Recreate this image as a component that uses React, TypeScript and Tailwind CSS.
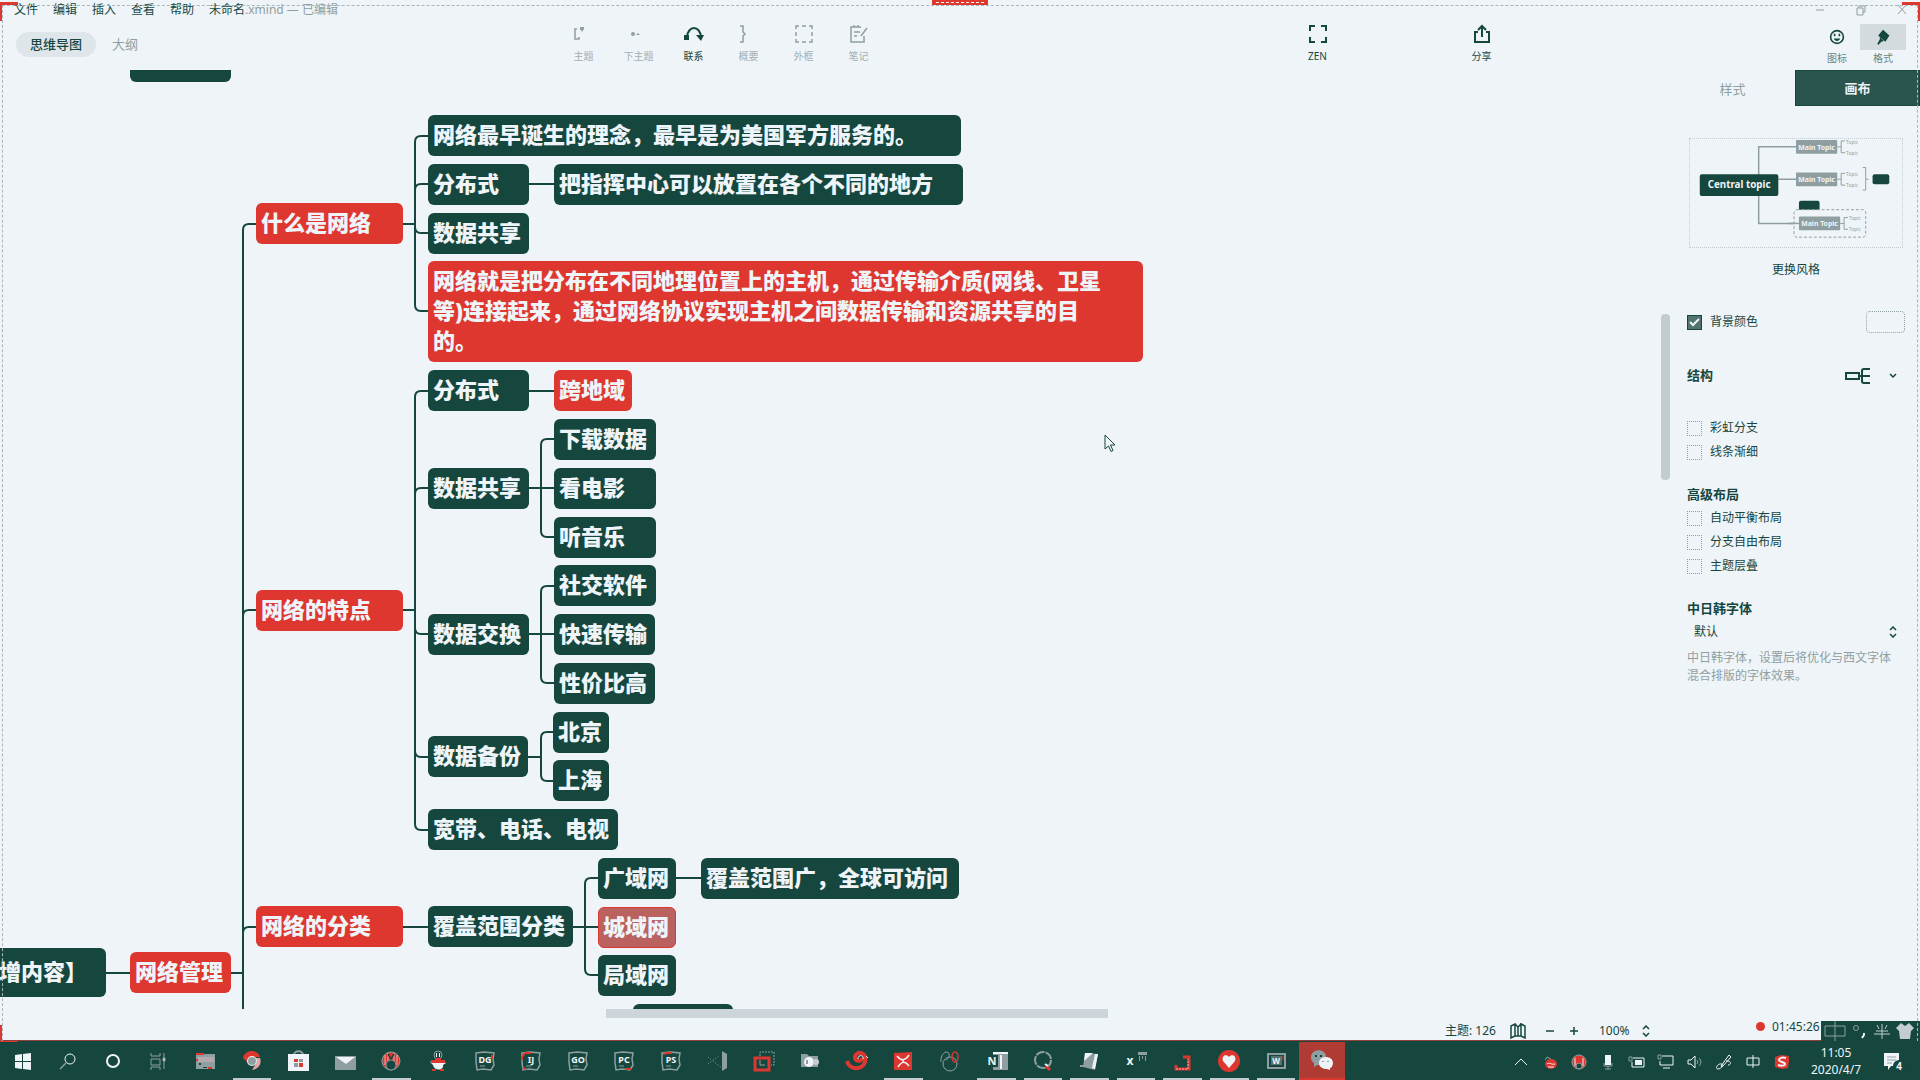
import React from "react";

const TOP = 70;

type Tone = "dark" | "red" | "selected";
type Topic = { x: number; y: number; w: number; h?: number; text: string; tone?: Tone };

const topics: Topic[] = [
  { x: 130, y: 41, w: 101, text: "" },
  { x: -6, y: 948, w: 112, h: 49, text: "增内容】" },
  { x: 130, y: 952, w: 101, h: 41, text: "网络管理", tone: "red" },
  { x: 256, y: 203, w: 147, text: "什么是网络", tone: "red" },
  { x: 256, y: 590, w: 147, text: "网络的特点", tone: "red" },
  { x: 256, y: 906, w: 147, text: "网络的分类", tone: "red" },
  { x: 428, y: 115, w: 533, text: "网络最早诞生的理念，最早是为美国军方服务的。" },
  { x: 428, y: 164, w: 101, text: "分布式" },
  { x: 554, y: 164, w: 409, text: "把指挥中心可以放置在各个不同的地方" },
  { x: 428, y: 213, w: 101, text: "数据共享" },
  {
    x: 428,
    y: 261,
    w: 715,
    h: 101,
    text: "网络就是把分布在不同地理位置上的主机，通过传输介质(网线、卫星\n等)连接起来，通过网络协议实现主机之间数据传输和资源共享的目\n的。",
    tone: "red",
  },
  { x: 428, y: 370, w: 101, text: "分布式" },
  { x: 554, y: 370, w: 78, text: "跨地域", tone: "red" },
  { x: 428, y: 468, w: 101, text: "数据共享" },
  { x: 554, y: 419, w: 102, text: "下载数据" },
  { x: 554, y: 468, w: 102, text: "看电影" },
  { x: 554, y: 517, w: 102, text: "听音乐" },
  { x: 428, y: 614, w: 101, text: "数据交换" },
  { x: 554, y: 565, w: 102, text: "社交软件" },
  { x: 554, y: 614, w: 101, text: "快速传输" },
  { x: 554, y: 663, w: 101, text: "性价比高" },
  { x: 428, y: 736, w: 100, text: "数据备份" },
  { x: 553, y: 712, w: 56, text: "北京" },
  { x: 553, y: 760, w: 56, text: "上海" },
  { x: 428, y: 809, w: 190, text: "宽带、电话、电视" },
  { x: 428, y: 906, w: 145, text: "覆盖范围分类" },
  { x: 598, y: 858, w: 78, text: "广域网" },
  { x: 701, y: 858, w: 258, text: "覆盖范围广，全球可访问" },
  { x: 598, y: 907, w: 78, text: "城域网", tone: "selected" },
  { x: 598, y: 955, w: 78, text: "局域网" },
  { x: 633, y: 1004, w: 100, text: "" },
];

type Branch = { from: [number, number]; trunk: number; to: number; ys: number[] };

const branches: Branch[] = [
  { from: [106, 973], trunk: 118, to: 130, ys: [973] },
  { from: [231, 973], trunk: 243, to: 256, ys: [224, 610, 927, 1100] },
  { from: [403, 224], trunk: 415, to: 428, ys: [136, 184, 233, 311] },
  { from: [529, 184], trunk: 541, to: 554, ys: [184] },
  { from: [403, 610], trunk: 415, to: 428, ys: [391, 488, 634, 757, 830] },
  { from: [529, 391], trunk: 541, to: 554, ys: [391] },
  { from: [529, 488], trunk: 541, to: 554, ys: [439, 488, 537] },
  { from: [529, 634], trunk: 541, to: 554, ys: [586, 634, 683] },
  { from: [528, 757], trunk: 541, to: 554, ys: [732, 781] },
  { from: [403, 927], trunk: 415, to: 428, ys: [927] },
  { from: [573, 927], trunk: 585, to: 598, ys: [878, 927, 975] },
  { from: [676, 878], trunk: 688, to: 701, ys: [878] },
];

function branchPath({ from: [x, y], trunk, to, ys }: Branch) {
  return ys
    .map((cy) => {
      const start = `M${x} ${y}H${trunk}`;
      if (cy === y) return `${start}H${to}`;
      const bend = cy < y ? 6 : -6;
      return `${start}V${cy + bend}Q${trunk} ${cy} ${trunk + 6} ${cy}H${to}`;
    })
    .join("");
}

const toneClass: Record<Tone, string> = {
  dark: "bg-[#15473f] text-[#eff4f8]",
  red: "bg-[#de3730] text-[#eff4f8]",
  selected: "bg-[#b9625f] text-[#eff4f8] border border-[#de3730] -indent-px",
};

function MindMap() {
  return (
    <div className="relative min-h-0 flex-1 overflow-hidden">
      <svg className="absolute inset-0 h-full w-full" fill="none" stroke="#15473f" strokeWidth="2">
        <g transform={`translate(0 ${-TOP})`}>
          {branches.map((b, i) => (
            <path key={i} d={branchPath(b)} />
          ))}
        </g>
      </svg>
      {topics.map((t, i) => (
        <div
          key={i}
          className={`absolute flex items-center overflow-hidden rounded-md pb-[3px] pl-[5px] text-[22px] leading-[30px] font-black whitespace-pre ${toneClass[t.tone ?? "dark"]}`}
          style={{ left: t.x, top: t.y - TOP, width: t.w, height: t.h ?? 41 }}
        >
          {t.text}
        </div>
      ))}
      <svg className="absolute top-[364px] left-[1104px] h-[20px] w-[13px]" viewBox="0 0 13 20">
        <path d="M1 1v14l3.5-3 2.5 5.5 2-1-2.500-5.500H11z" fill="#eff4f8" stroke="#15473f" />
      </svg>
    </div>
  );
}

type IconProps = { children: React.ReactNode; className?: string; box?: string };
function Icon({ children, className = "h-5 w-5", box = "0 0 20 20" }: IconProps) {
  return (
    <svg className={className} viewBox={box} fill="none" stroke="currentColor" strokeWidth="2" aria-hidden="true">
      {children}
    </svg>
  );
}

const tools = [
  { label: "主题", icon: <><path d="M3 5H1v10h4v-2" strokeWidth="1.500" /><path d="M6 3h4v2l-2 3-1-2H6z" fill="currentColor" stroke="none" /></> },
  { label: "下主题", icon: <><circle cx="4" cy="10" r="2" fill="currentColor" stroke="none" /><path d="M7 11l2-2 2 2z" fill="currentColor" stroke="none" /></> },
  { label: "联系", active: true, icon: <><path d="M3 13C4 1 16 1 17 13" /><rect x="0" y="11" width="5" height="5" fill="currentColor" stroke="none" /><path d="M12 11h8l-3 6z" fill="currentColor" stroke="none" /></> },
  { label: "概要", icon: <path d="M1 2h3v6l2 2-2 2v6H1" strokeWidth="1.500" /> },
  { label: "外框", icon: <path d="M2 5V2h3M8 2h4M15 2h3v3M18 8v4M18 15v3h-3M12 18H8M5 18H2v-3M2 12V8" strokeWidth="1.500" /> },
  { label: "笔记", icon: <path d="M12 3H2v15h13v-6M5 1v2M9 1v2M5 8h6M5 12h3M18 4l-6 8" strokeWidth="1.500" /> },
];

function ToolButton({ label, active, children, boxed }: { label: string; active?: boolean; boxed?: boolean; children: React.ReactNode }) {
  return (
    <button className={`flex flex-col items-center gap-1 ${boxed ? "w-[46px]" : "w-[55px]"} ${active ? "text-[#15473f]" : "text-[#8f9fa1]"}`}>
      {children}
      <span className={`text-[10px] leading-4 ${active ? (boxed ? "text-[#6b8582]" : "") : "text-[#a3b0b3]"}`}>{label}</span>
    </button>
  );
}

function Header() {
  return (
    <header className="flex h-[70px] shrink-0 flex-col">
      <div className="flex h-[20px] items-center justify-between pl-[14px] text-[12px] leading-[20px]">
        <nav className="flex">
          {["文件", "编辑", "插入", "查看", "帮助"].map((m) => (
            <button key={m} className="mr-[15px] w-6 whitespace-nowrap">
              {m}
            </button>
          ))}
          <span>
            未命名<span className="text-[#8f9fa1]">.xmind — 已编辑</span>
          </span>
        </nav>
        <div className="flex gap-[29px] pr-3 text-[#8f9fa1]">
          <button aria-label="最小化"><Icon className="h-3 w-3" box="0 0 12 12"><path d="M2 6h8" strokeWidth="1" /></Icon></button>
          <button aria-label="还原"><Icon className="h-3 w-3" box="0 0 12 12"><path d="M2 4h6v7H2zM4 4V2h6v6H8" strokeWidth="1" /></Icon></button>
          <button aria-label="关闭"><Icon className="h-3 w-3" box="0 0 12 12"><path d="M2 1l8 9M10 1l-8 9" strokeWidth="1" /></Icon></button>
        </div>
      </div>
      <div className="grid flex-1 grid-cols-[556fr_734fr_336fr_294fr]">
        <div className="flex items-start gap-4 pt-3 pl-4 text-[13px] leading-[25px]">
          <button className="w-20 rounded-full bg-[#dfe6ea] font-medium">思维导图</button>
          <button className="text-[#8f9fa1]">大纲</button>
        </div>
        <div className="flex pt-1">
          {tools.map((t) => (
            <ToolButton key={t.label} label={t.label} active={t.active}>
              <Icon>{t.icon}</Icon>
            </ToolButton>
          ))}
        </div>
        <div className="flex gap-[109px] pt-1">
          <ToolButton label="ZEN" active>
            <Icon><path d="M2 7V2h5M13 2h5v5M18 13v5h-5M7 18H2v-5" /></Icon>
          </ToolButton>
          <ToolButton label="分享" active>
            <Icon><path d="M6 8H3v10h14V8h-3M10 13V2M6 6l4-4 4 4" /></Icon>
          </ToolButton>
        </div>
        <div className="flex justify-end pt-1 pr-[14px]">
          <ToolButton label="图标" active boxed>
            <span className="-mb-1 flex h-[26px] items-center">
              <Icon className="h-4 w-4">
                <circle cx="10" cy="10" r="8" />
                <path d="M6 12h8c-1 4-7 4-8 0z" fill="currentColor" stroke="none" />
                <path d="M7 6v3M13 6v3" />
              </Icon>
            </span>
          </ToolButton>
          <ToolButton label="格式" active boxed>
            <span className="-mb-1 flex h-[26px] w-[46px] items-center justify-center bg-[#d3dbdf]">
              <Icon className="h-4 w-4">
                <path d="M10 1l8 7-5 8-9-8zM6 10l5 5-3 1-4 4-1-2 3-5z" fill="currentColor" stroke="none" />
              </Icon>
            </span>
          </ToolButton>
        </div>
      </div>
    </header>
  );
}

function ThemePreview() {
  const rows = [
    { x: 107, y: 1 },
    { x: 107, y: 34 },
    { x: 110, y: 79 },
  ];
  return (
    <svg className="h-[110px] w-[214px] border border-dotted border-[#c3cdd1]" viewBox="0 0 214 110" fill="none">
      <path d="M107 8H69v78h40M89 41h18" stroke="#8f9fa1" strokeWidth="1.500" />
      <rect x="110" y="63" width="21" height="12" rx="2" fill="#15473f" />
      <rect x="105" y="72" width="73" height="28" rx="3" fill="#eff4f8" stroke="#8f9fa1" strokeDasharray="3 2" />
      <path d="M98 86h12" stroke="#8f9fa1" strokeWidth="1.500" />
      <rect x="9" y="36" width="80" height="22" rx="2" fill="#15473f" />
      <text x="49" y="50" fontSize="10" fontWeight="700" fill="#eff4f8" textAnchor="middle">Central topic</text>
      {rows.map(({ x, y }) => (
        <g key={y}>
          <rect x={x} y={y} width="42" height="14" rx="1" fill="#8f9fa1" />
          <text x={x + 21} y={y + 10} fontSize="7" fontWeight="700" fill="#eff4f8" textAnchor="middle">Main Topic</text>
          <path d={`M${x + 42} ${y + 7}h4M${x + 50} ${y + 1}h-4v12h4`} stroke="#8f9fa1" />
          <text x={x + 51} y={y + 4} fontSize="5" fill="#8f9fa1">Topic</text>
          <text x={x + 51} y={y + 15} fontSize="5" fill="#8f9fa1">Topic</text>
        </g>
      ))}
      <path d="M175 29h3v23h-3M178 41h3" stroke="#8f9fa1" />
      <rect x="185" y="36" width="17" height="10" rx="2" fill="#15473f" />
    </svg>
  );
}

function Check({ label, checked }: { label: string; checked?: boolean }) {
  return (
    <label className="flex h-6 items-center gap-2 text-[12px]">
      <span className="relative h-[15px] w-[15px]">
        <input
          type="checkbox"
          defaultChecked={checked}
          className="peer block h-[15px] w-[15px] appearance-none border border-dotted border-[#8f9fa1] checked:border-solid checked:border-[#15473f] checked:bg-[#52736f]"
        />
        <svg className="pointer-events-none absolute inset-0 hidden peer-checked:block" viewBox="0 0 15 15" fill="none" stroke="#eff4f8" strokeWidth="2">
          <path d="M3 7l3 3 6-6" />
        </svg>
      </span>
      {label}
    </label>
  );
}

function UpDown() {
  return (
    <Icon className="h-3 w-2" box="0 0 8 12">
      <path d="M1 4l3-3 3 3M1 8l3 3 3-3" strokeWidth="1.500" />
    </Icon>
  );
}

function FormatPanel() {
  return (
    <aside className="w-[250px] shrink-0">
      <div className="grid h-[34px] grid-cols-2 text-[13px] leading-[34px]">
        <button className="pt-px text-[#8f9fa1]">样式</button>
        <button className="border border-[#15473f] bg-[#2a554f] font-bold text-[#eff4f8]">画布</button>
      </div>
      <div className="flex flex-col pr-[15px] pl-[17px]">
        <div className="mt-[34px] flex flex-col items-center gap-3">
          <ThemePreview />
          <button className="text-[12px] leading-5">更换风格</button>
        </div>
        <div className="mt-[30px] flex items-center justify-between">
          <Check label="背景颜色" checked />
          <button aria-label="选择背景颜色" className="h-[22px] w-[39px] rounded-sm border border-dotted border-[#8f9fa1]" />
        </div>
        <div className="mt-[30px] flex h-6 items-center">
          <h2 className="flex-1 text-[13px] font-bold">结构</h2>
          <button aria-label="选择结构" className="flex items-center gap-[18px] pr-2">
            <Icon className="h-4 w-[26px]" box="0 0 26 16">
              <path d="M1 5h13v6H1zM14 8h11M25 1h-6q-2 0-2 2v10q0 2 2 2h6" />
            </Icon>
            <Icon className="h-2 w-2" box="0 0 8 8"><path d="M1 2l3 3 3-3" strokeWidth="1.500" /></Icon>
          </button>
        </div>
        <div className="mt-[28px]">
          <Check label="彩虹分支" />
          <Check label="线条渐细" />
        </div>
        <h2 className="mt-[18px] text-[13px] leading-6 font-bold">高级布局</h2>
        <Check label="自动平衡布局" />
        <Check label="分支自由布局" />
        <Check label="主题层叠" />
        <label htmlFor="cjk-font" className="mt-[18px] text-[13px] leading-6 font-bold">中日韩字体</label>
        <div className="relative flex items-center">
          <select id="cjk-font" className="h-6 w-full appearance-none bg-transparent pl-[7px] text-[12px]">
            <option>默认</option>
          </select>
          <span className="pointer-events-none absolute right-2"><UpDown /></span>
        </div>
        <p className="mt-[5px] pr-[10px] text-[12px] leading-[18px] text-[#8f9fa1]">中日韩字体，设置后将优化与西文字体混合排版的字体效果。</p>
      </div>
    </aside>
  );
}

function StatusBar() {
  return (
    <div className="flex h-[23px] shrink-0 justify-end border-b border-[#8f4039] text-[12px]">
      <div className="flex items-center pt-1">
        <span className="w-[65px]">主题: 126</span>
        <button aria-label="导航图" className="mr-5">
          <Icon className="h-4 w-4" box="0 0 16 16"><path d="M1 3l4-2v12l-4 2zM5 1l3 3v9l-3 0M8 4l3-3v12H8M11 1l4 2v12l-4-2z" strokeWidth="1.500" /></Icon>
        </button>
        <button aria-label="缩小" className="mr-4"><Icon className="h-2 w-2" box="0 0 8 8"><path d="M0 4h8" strokeWidth="1.500" /></Icon></button>
        <button aria-label="放大" className="mr-[21px]"><Icon className="h-2 w-2" box="0 0 8 8"><path d="M0 4h8M4 0v8" strokeWidth="1.500" /></Icon></button>
        <span className="w-[43px]">100%</span>
        <button aria-label="调整缩放比例" className="mr-[106px]"><UpDown /></button>
      </div>
      <div className="flex h-[17px] items-center">
        <span className="mr-[7px] h-[9px] w-[9px] rounded-full bg-[#de3730]" />
        <span className="w-[49px] text-[12px] leading-4 whitespace-nowrap">01:45:26</span>
      </div>
      <div className="mt-[3px] flex h-[20px] w-[99px] items-center justify-between bg-[#15473f] pr-[6px] pl-[3px] text-[#8f9fa1]">
        <Icon className="h-5 w-[22px]" box="0 0 22 20"><path d="M1 5h20v10H1zM11 0v20" strokeWidth="1" /></Icon>
        <Icon className="h-5 w-4" box="0 0 16 20"><circle cx="4" cy="7" r="2.500" strokeWidth="1" /><path d="M12 12v2l-2 3" stroke="#eff4f8" /></Icon>
        <Icon className="h-4 w-4" box="0 0 16 16"><path d="M8 1v15M3 2l2 4M13 2l-2 4M2 8h12M0 11h16" strokeWidth="1" stroke="#c3cdd1" /></Icon>
        <Icon className="h-4 w-[18px]" box="0 0 18 16"><path d="M5 0l4 3 4-3 5 5-3 3-1 8H4L3 8 0 5z" fill="#c3cdd1" stroke="none" /></Icon>
      </div>
    </div>
  );
}

const G = "#8f9fa1";
const W = "#eff4f8";
const R = "#de3730";
const D = "#15473f";

const startIcons = [
  <g key="win" fill={W} stroke="none"><path d="M2 4l7-1v7H2zM10 3l8-1v8h-8zM2 11h7v7l-7-1zM10 11h8v8l-8-1z" /></g>,
  <g key="search" stroke={G} strokeWidth="1.500"><circle cx="12" cy="8" r="5" stroke={W} strokeWidth="1" /><path d="M8 12l-6 6" /></g>,
  <circle key="cortana" cx="10" cy="10" r="6" stroke={W} />,
  <g key="taskview" stroke={G} strokeWidth="1"><path d="M3 2v3h9V2M3 8h9v6H3zM3 19v-3h9v3M16 2v16" /><path d="M15 7h2v3h-2z" fill={W} /></g>,
];

function Ide({ name, accent }: { name: string; accent: string }) {
  return (
    <g>
      <path d="M1 2l8-1 10 1-1 6 1 6-3 5-8-1-6 1-1-8z" fill={D} stroke={G} strokeWidth="1.500" />
      <path d={accent} stroke={R} strokeWidth="2" />
      <text x="10" y="12" fontSize="9" fontWeight="700" fill={W} stroke="none" textAnchor="middle">{name}</text>
      <path d="M5 15h5" stroke={G} strokeWidth="1" />
    </g>
  );
}

const taskIcons: { name: string; open?: boolean; art: React.ReactNode }[] = [
  { name: "文件资源管理器", art: <g stroke="none"><path d="M1 3h19v15H1z" fill={G} /><path d="M1 2h8v2H1z" fill={R} /><path d="M3 6h16v5H3z" fill="#b4a9ab" /><path d="M1 8h2v2H1zM13 16h4v2h-4z" fill={R} /><path d="M4 12h2v2H4zM8 16h4v1H8z" fill={D} /></g> },
  { name: "Chrome", open: true, art: <g stroke="none"><path d="M1 7C3-2 16-2 18 6h-8L5 12z" fill={R} /><path d="M18 7c2 5-1 11-8 12l5-8-1-4z" fill="#e8a5a5" /><path d="M2 8c-1 5 3 9 8 9l2-3H8z" fill={D} /><circle cx="10" cy="10" r="5" fill={W} /><circle cx="10" cy="10" r="4" fill={G} /></g> },
  { name: "应用商店", art: <g><path d="M6 4c0-5 9-5 9 0" stroke={G} /><path d="M0 3h21v17H0z" fill={W} stroke="none" /><path d="M6 8h4v3H6zM11 12h4v4h-4z" fill={R} stroke="none" /><path d="M11 8h4v3h-4zM6 12h4v4H6z" fill={G} stroke="none" /></g> },
  { name: "邮件", art: <g stroke="none"><path d="M0 5h21v14H0z" fill={G} /><path d="M1 6h19l-9 7z" fill={W} /></g> },
  { name: "录屏", open: true, art: <g><circle cx="10" cy="10" r="9" fill={R} stroke={G} strokeWidth="1" /><path d="M4 4v10M7 2v8M13 2v8M16 4v10" stroke="#e8b5b5" strokeWidth="1" /><circle cx="10" cy="14" r="5" fill={D} stroke={G} strokeWidth="1" /><path d="M7 3l3 5 3-5" stroke={D} strokeWidth="1.500" /></g> },
  { name: "QQ", art: <g stroke="none"><circle cx="10" cy="4" r="4" fill={D} stroke={G} strokeWidth="1" /><path d="M8 2h1v4H8zM11 2h1v4h-1z" fill={W} /><path d="M7 7h6v2H7z" fill={R} /><path d="M2 11l3-1h10l3 2-3 2c1 6-9 6-10 0z" fill={W} /><path d="M3 9h14v3H3zM4 18h4v2H4zM12 18h4v2h-4z" fill={R} /></g> },
  { name: "DataGrip", art: <Ide name="DG" accent="M17 4v4" /> },
  { name: "IntelliJ", art: <Ide name="IJ" accent="M1 9V6l3-4h6M2 17l3 1" /> },
  { name: "GoLand", art: <Ide name="GO" accent="" /> },
  { name: "PyCharm", art: <Ide name="PC" accent="M11 18h6" /> },
  { name: "PhpStorm", art: <Ide name="PS" accent="M2 3l4-1h5" /> },
  { name: "Visual Studio", art: <g><path d="M1 6l14 11M1 13L13 4" stroke={G} strokeWidth="1" strokeDasharray="1 2" /><path d="M15 0l5 3v14l-5 3z" fill={G} stroke="none" /></g> },
  { name: "VMware", art: <g><path d="M6 5V1h14v13h-3" stroke={G} strokeWidth="1" strokeDasharray="2 1" /><path d="M1 7h14v12H1z" stroke={R} strokeWidth="3" /><path d="M6 9v5h5" stroke={G} strokeWidth="1" /></g> },
  { name: "相机", art: <g stroke="none"><path d="M1 3h6l2 2h9v11H1z" fill={G} /><circle cx="9" cy="11" r="5" fill={W} /><circle cx="16" cy="11" r="3" fill="#c3cdd1" /><path d="M6 9h2v4H6z" fill={G} /></g> },
  { name: "蜗牛", art: <g><path d="M0 10c2 9 15 10 18 1C21 1 9-1 8 6c0 5 7 5 7 1" stroke={R} strokeWidth="4" /><path d="M11 8c0-5 6-4 5 0M19 5l2 2" stroke={W} strokeWidth="1" /></g> },
  { name: "XMind", open: true, art: <g><path d="M1 2l18-1v18H1z" fill={R} stroke="none" /><path d="M4 5c4 5 8 5 12-1M5 16c4-6 7-6 11-1M10 8v3" stroke={W} strokeWidth="1.500" /></g> },
  { name: "百度网盘", art: <g stroke={G} strokeWidth="1"><circle cx="10" cy="13" r="7" /><path d="M1 11C0 3 7-2 9 3c1 3-1 5-3 6" /><ellipse cx="15" cy="6" rx="3" ry="5" stroke={R} strokeWidth="1.500" /></g> },
  { name: "OneNote", open: true, art: <g stroke="none"><path d="M6 1h15v18H6z" fill={G} /><path d="M6 1h15v2H6zM13 4h2v14h-2z" fill={W} /><path d="M0 4h11v12H0z" fill={D} /><text x="5" y="14" fontSize="11" fontWeight="700" fill={W} textAnchor="middle">N</text></g> },
  { name: "搜索", open: true, art: <g><circle cx="10" cy="9" r="8" stroke={G} strokeDasharray="9 1" /><path d="M13 15l4 4" stroke={R} strokeWidth="3" /><path d="M12 13l3 2" stroke={W} /></g> },
  { name: "记事本", open: true, art: <g stroke="none"><path d="M5 2l13 1-3 16-12-3z" fill={G} /><path d="M5 2l8 0-9 8zM15 3h3l-3 15-3-1z" fill={W} /><path d="M0 14h4v2H0z" fill={G} /></g> },
  { name: "Xshell", open: true, art: <g stroke="none"><text x="4" y="14" fontSize="12" fontWeight="700" fill={W} textAnchor="middle">x</text><path d="M12 1h9v3h-9zM13 5h1v5h-1zM16 5h1v3h-1zM19 5h1v5h-1z" fill={G} /></g> },
  { name: "Java", open: true, art: <g><path d="M10 6h6v12H3v-4" stroke={R} strokeWidth="3" /><path d="M3 18h12V8" stroke="#e8b5b5" strokeWidth="1" strokeDasharray="2 1" /></g> },
  { name: "收藏", open: true, art: <g stroke="none"><circle cx="10" cy="10" r="11" fill={R} /><path d="M10 17L4 10c-2-6 4-7 6-4 2-3 8-2 6 4z" fill={W} /></g> },
  { name: "WPS", open: true, art: <g><path d="M2 3h17v14H2z" stroke={G} /><path d="M5 5h11v9H5z" fill="#52736f" stroke="none" /><text x="10" y="13" fontSize="8" fontWeight="700" fill={W} stroke="none" textAnchor="middle">W</text><path d="M17 5v4" stroke={R} strokeWidth="1" /></g> },
];

function Taskbar() {
  return (
    <footer className="flex h-[39px] shrink-0 bg-[#15473f] text-[#eff4f8]">
      <div className="flex">
        {startIcons.map((art, i) => (
          <button key={i} aria-label={["开始", "搜索", "Cortana", "任务视图"][i]} className="flex w-[45px] items-center justify-center">
            <Icon>{art}</Icon>
          </button>
        ))}
      </div>
      <div className="ml-[2px] flex w-[1163px]">
        {taskIcons.map(({ name, open, art }) => (
          <button
            key={name}
            aria-label={name}
            className={`mx-1 flex flex-1 items-center justify-center border-b-2 pt-[3px] ${open ? "border-[#c3cdd1]" : "border-transparent"}`}
          >
            <Icon className="h-5 w-5 overflow-visible">{art}</Icon>
          </button>
        ))}
        <button aria-label="微信" className="mt-px flex w-[46px] items-center justify-center border-b-2 border-[#de3730] bg-[#b03b33]">
          <Icon className="h-6 w-6" box="0 0 24 24">
            <g stroke="none">
              <path d="M1 9c0-9 15-9 15 0s-6 8-9 8l-3 2v-4c-2-1-3-3-3-6z" fill={G} />
              <path d="M5 7h2v2H5zM10 7h2v2h-2z" fill={D} />
              <path d="M9 15c0-8 14-8 14 0 0 3-2 5-3 5v2l-3-1c-4 0-8-2-8-6z" fill={W} />
              <path d="M12 13h2v1h-2zM17 13h2v1h-2z" fill={G} />
            </g>
          </Icon>
        </button>
      </div>
      <div className="ml-auto flex items-center pr-[14px]">
        <div className="grid grid-cols-10 pt-[2px]">
          {tray.map((art, i) => (
            <span key={i} className="flex w-[29px] justify-center">
              <Icon className="h-4 w-4 overflow-visible" box="0 0 16 16">{art}</Icon>
            </span>
          ))}
        </div>
        <div className="w-[76px] pl-1 text-center text-[12px] leading-[17px]">
          <div>11:05</div>
          <div>2020/4/7</div>
        </div>
        <button aria-label="通知" className="ml-3 pt-[2px]">
          <Icon className="h-5 w-[22px]" box="0 0 22 20">
            <path d="M0 1h15v13H7l-3 4v-4H0z" fill={W} stroke="none" />
            <path d="M3 5h9M3 8h9M3 11h5" stroke={G} strokeWidth="1" />
            <circle cx="15" cy="14" r="6" fill={D} stroke="none" />
            <text x="15" y="18" fontSize="10" fontWeight="700" fill={W} stroke="none" textAnchor="middle">4</text>
          </Icon>
        </button>
      </div>
    </footer>
  );
}

const tray = [
  <path key="up" d="M2 11l6-6 6 6" stroke={W} strokeWidth="1" />,
  <g key="a"><path d="M3 6l2-3 4 2" stroke={G} strokeWidth="1" /><ellipse cx="9" cy="10" rx="6" ry="5" fill={R} stroke="none" /><path d="M5 10c2-2 5 1 8 0M6 13h6" stroke={W} strokeWidth="1" /></g>,
  <g key="b"><circle cx="8" cy="8" r="7" fill={R} stroke={G} strokeWidth="1" /><path d="M4 4v8M12 4v8" stroke="#e8b5b5" strokeWidth="1.500" /><circle cx="8" cy="12" r="3" fill={D} stroke={G} strokeWidth="1" /></g>,
  <g key="mic"><path d="M5 1h6v10H5z" fill={W} stroke="none" /><path d="M4 9v3h8V9M8 12v3M5 15h6" stroke={G} strokeWidth="1" /></g>,
  <g key="bat"><path d="M4 4h11v9H3V8" stroke={W} strokeWidth="1" /><path d="M6 6h7v5H6z" fill={W} stroke="none" /><path d="M0 3h3v4H0z" stroke={G} strokeWidth="1" /></g>,
  <g key="net" stroke={W} strokeWidth="1"><path d="M4 2h11v9H2V7M5 14h7" /><path d="M0 1h3v4H0z" stroke={G} /></g>,
  <g key="vol" stroke={W} strokeWidth="1"><path d="M1 6h3l4-4v12l-4-4H1z" /><path d="M10 6q2 2 0 4M12 4q4 4 0 8" stroke={G} /></g>,
  <g key="pen" stroke={W} strokeWidth="1"><path d="M5 12L13 1l2 2-9 10zM6 10c-5-1-7 5-4 5s5-3 4-5M10 7c5-1 6 4 2 4" /></g>,
  <path key="zh" d="M2 4h12v7H2zM8 1v13" stroke={W} strokeWidth="1" />,
  <g key="s"><path d="M1 3l6-2 8 1v5l-1 7-6 1-7-2z" fill={R} stroke="none" /><path d="M12 4C8 3 5 4 5 6s6 2 6 4-4 2-7 1" stroke={W} strokeWidth="2" /></g>,
];

export default function App() {
  return (
    <div className="relative flex h-screen min-h-[600px] flex-col overflow-hidden bg-[#eff4f8] font-['Noto_Sans','Noto_Sans_CJK_SC',sans-serif] text-[#15473f]">
      <Header />
      <main className="flex min-h-0 flex-1">
        <section className="flex min-w-0 flex-1">
          <div className="flex min-w-0 flex-1 flex-col">
            <MindMap />
            <div className="flex h-[9px] shrink-0">
              <div className="w-[36.5%]" />
              <div className="w-[30.2%] bg-[#ccd5d9]" />
            </div>
          </div>
          <div className="flex w-[9px] flex-col">
            <div className="h-[25.7%]" />
            <div className="h-[17.6%] rounded-sm bg-[#c3cdd1]" />
          </div>
        </section>
        <FormatPanel />
      </main>
      <StatusBar />
      <Taskbar />
      <div className="pointer-events-none absolute inset-x-0 top-[5px] bottom-[39px] mx-[2px] border border-b-0 border-dashed border-[#a9b6b9]" />
      <div className="pointer-events-none absolute top-[2px] left-0 h-[19px] w-[18px] border-t-[3px] border-l-2 border-[#de3730]" />
      <div className="pointer-events-none absolute top-[2px] right-0 h-[19px] w-[18px] border-t-[3px] border-r-2 border-[#de3730]" />
      <div className="pointer-events-none absolute bottom-[38px] left-0 h-[17px] w-[18px] border-b border-l-2 border-[#de3730]" />
      <div className="pointer-events-none absolute top-0 left-1/2 flex h-[5px] w-[56px] -translate-x-1/2 items-center bg-[#de3730] px-1">
        <div className="w-full border-t border-dashed border-[#eff4f8]" />
      </div>
    </div>
  );
}
